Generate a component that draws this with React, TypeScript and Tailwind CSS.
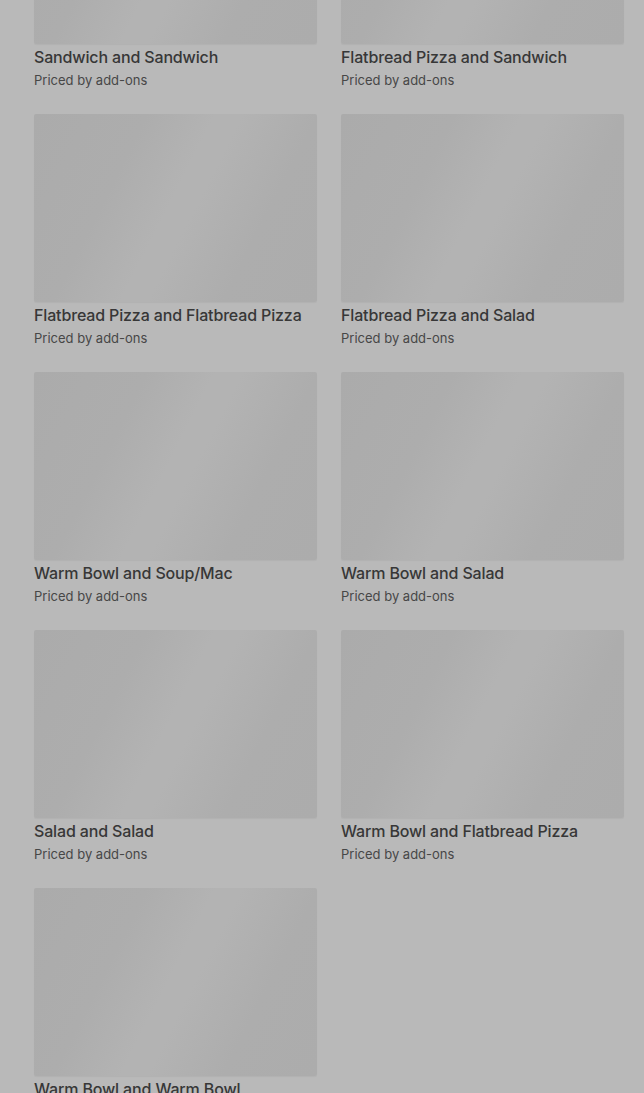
const items = [
  "Sandwich and Sandwich",
  "Flatbread Pizza and Sandwich",
  "Flatbread Pizza and Flatbread Pizza",
  "Flatbread Pizza and Salad",
  "Warm Bowl and Soup/Mac",
  "Warm Bowl and Salad",
  "Salad and Salad",
  "Warm Bowl and Flatbread Pizza",
  "Warm Bowl and Warm Bowl",
]

function ComboCard({ name }: { name: string }) {
  return (
    <div className="flex flex-col">
      <div className="h-[188px] w-full rounded-[2px] bg-[linear-gradient(117deg,#ababab_0%,#adadad_30%,#b3b3b3_48%,#b3b3b3_55%,#adadad_75%,#acacac_100%)] shadow-[0_1px_1px_rgba(0,0,0,0.04)]" />
      <div className="mt-px text-base leading-6 font-medium tracking-[-0.15px] text-[#373737]">{name}</div>
      <div className="mt-px text-[13px] leading-5 text-[#474747]">Priced by add-ons</div>
    </div>
  )
}

export default function App() {
  return (
    <div className="h-[1093px] overflow-hidden bg-[#b9b9b9] font-['Inter',sans-serif]">
      <div className="-mt-[144px] grid grid-cols-2 gap-x-6 gap-y-6 pl-[34px] pr-5">
        {items.map((name) => (
          <ComboCard key={name} name={name} />
        ))}
      </div>
    </div>
  )
}
